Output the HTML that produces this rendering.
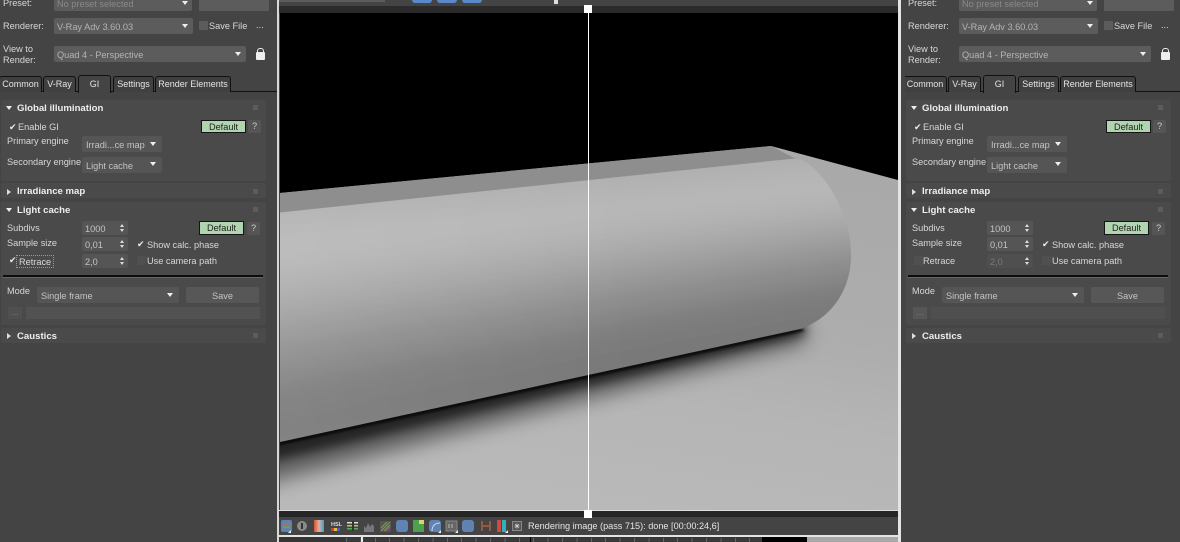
<!DOCTYPE html>
<html><head><meta charset="utf-8"><style>
html,body{margin:0;padding:0;background:#444}
#r{position:relative;width:1180px;height:542px;overflow:hidden;background:#444;font-family:"Liberation Sans",sans-serif;font-size:9.2px;color:#ddd}
#r div,#r span{position:absolute;white-space:nowrap;box-sizing:border-box}
.p{top:0;height:542px;width:275px;overflow:hidden;background:#444}
.dd{background:#5c5c5c;color:#b4b4b4;line-height:18px;padding-left:3px;border-radius:2px}
.dd2{background:#555;color:#c4c4c4;line-height:18px;padding-left:4px;border-radius:2px}
.ar{width:0;height:0;border-left:3px solid transparent;border-right:3px solid transparent;border-top:4px solid #eee}
.tab{top:76px;height:16px;background:#404040;border:1px solid #111;border-bottom:0;border-radius:3px 3px 0 0;line-height:15px;text-align:center;color:#e4e4e4;font-size:9px}
.ro{left:1px;width:265px;background:#4a4a4a;border-radius:2px}
.h{font-weight:bold;font-size:9.6px;color:#eee;left:17px}
.t{color:#d8d8d8}
.cb{width:9px;height:9px;background:#505050}
.ck{color:#eee;font-size:9px;line-height:9px}
.sp{background:#555;color:#c4c4c4;width:46px;height:14px;line-height:16px;padding-left:3px;left:82px;border-radius:2px}
.sp:after{content:"";position:absolute;right:4px;top:0;width:0;height:0;border-left:2px solid transparent;border-right:2px solid transparent;border-top:3px solid transparent;border-bottom:3px solid #ddd}
.sp:before{content:"";position:absolute;right:4px;top:8px;width:0;height:0;border-left:2px solid transparent;border-right:2px solid transparent;border-top:3px solid #ddd}
.def{width:45px;height:13px;background:#b0d4b0;border:1px solid #151515;color:#222;text-align:center;line-height:12px}
.q{width:13px;height:13px;background:#555;color:#ccc;text-align:center;line-height:13px;border-radius:2px}
.gr{width:5px;height:5px;left:253px;background:#5c5c5c}
</style></head><body><div id="r">

<!-- centre -->
<div style="left:277px;top:0;width:625px;height:6px;background:#444"></div>
<div style="left:278px;top:0;width:107px;height:2px;background:#5c5c5c"></div>
<div style="left:412px;top:0;width:20px;height:3px;background:#5b88c8;border-radius:0 0 3px 3px"></div>
<div style="left:437px;top:0;width:20px;height:3px;background:#5b88c8;border-radius:0 0 3px 3px"></div>
<div style="left:462px;top:0;width:20px;height:3px;background:#5b88c8;border-radius:0 0 3px 3px"></div>
<div style="left:554px;top:0;width:4px;height:4px;background:#ddd"></div>
<div style="left:279px;top:6px;width:620px;height:7px;background:#2b2b2b"></div>
<svg style="position:absolute;left:280px;top:13px" width="618" height="497" viewBox="280 13 618 497">
<defs>
<linearGradient id="f" gradientUnits="userSpaceOnUse" x1="700" y1="150" x2="640" y2="510">
<stop offset="0" stop-color="#a9a9a9"/><stop offset=".45" stop-color="#adadad"/><stop offset=".7" stop-color="#b5b5b5"/><stop offset="1" stop-color="#b9b9b9"/></linearGradient>
<linearGradient id="lt" gradientUnits="userSpaceOnUse" x1="280" y1="0" x2="640" y2="0"><stop offset="0" stop-color="#fff" stop-opacity=".07"/><stop offset="1" stop-color="#fff" stop-opacity="0"/></linearGradient>
<filter id="b" filterUnits="userSpaceOnUse" x="150" y="50" width="800" height="520"><feGaussianBlur stdDeviation="10"/></filter>
<filter id="b3" filterUnits="userSpaceOnUse" x="150" y="50" width="800" height="520"><feGaussianBlur stdDeviation="5"/></filter>
<filter id="b2" filterUnits="userSpaceOnUse" x="150" y="50" width="800" height="520"><feGaussianBlur stdDeviation="1"/></filter>
<filter id="b5" filterUnits="userSpaceOnUse" x="150" y="50" width="800" height="520"><feGaussianBlur stdDeviation="9"/></filter>
<clipPath id="cyl"><path d="M280,212.5 L790,159 Q800,158 806,162 C826,176 852,214 851,258 C850,290 832,318 800,329 L280,442 Z"/></clipPath>
</defs>
<rect x="280" y="13" width="618" height="497" fill="#000"/>
<polygon points="280,193 771,146 898,180 898,510 280,510" fill="url(#f)"/>
<polygon points="280,193 771,146 796,159 280,214" fill="#8e8e8e"/>
<polygon points="200,440 800,310 806,342 200,500" fill="#000" opacity=".5" filter="url(#b)"/>
<polygon points="200,440 800,320 806,334 200,478" fill="#000" opacity=".6" filter="url(#b3)"/>
<polygon points="240,450 800,328 805,331 240,454" fill="#000" opacity=".7" filter="url(#b2)"/>
<g clip-path="url(#cyl)"><g filter="url(#b5)">
<polygon points="180,169.9 900,117.2 900,149.6 180,216.7" fill="#adadad"/>
<polygon points="180,216.7 900,149.6 900,165.8 180,240.1" fill="#b2b2b2"/>
<polygon points="180,240.1 900,165.8 900,182 180,263.5" fill="#b8b8b8"/>
<polygon points="180,263.5 900,182 900,198.2 180,286.9" fill="#b6b6b6"/>
<polygon points="180,286.9 900,198.2 900,214.4 180,310.3" fill="#aeaeae"/>
<polygon points="180,310.3 900,214.4 900,230.6 180,333.7" fill="#a4a4a4"/>
<polygon points="180,333.7 900,230.6 900,246.8 180,357.1" fill="#999"/>
<polygon points="180,357.1 900,246.8 900,263 180,380.5" fill="#8e8e8e"/>
<polygon points="180,380.5 900,263 900,279.2 180,403.9" fill="#848484"/>
<polygon points="180,403.9 900,279.2 900,295.4 180,427.3" fill="#7c7c7c"/>
<polygon points="180,427.3 900,295.4 900,311.6 180,450.7" fill="#797979"/>
<polygon points="180,450.7 900,311.6 900,344 180,497.5" fill="#7a7a7a"/>
</g><rect x="280" y="140" width="360" height="310" fill="url(#lt)"/></g>
</svg>
<div style="left:279px;top:510px;width:620px;height:1px;background:#ddd"></div>
<div style="left:279px;top:511px;width:620px;height:6px;background:#262626"></div>
<div style="left:279px;top:517px;width:620px;height:18px;background:#444"></div>
<div style="left:279px;top:535px;width:620px;height:1.5px;background:#e4e4e4"></div>
<div style="left:279px;top:536.5px;width:620px;height:5.5px;background:#363636"></div>
<div style="left:346px;top:538px;width:416px;height:4px;background:repeating-linear-gradient(90deg,#666 0 1px,#3a3a3a 1px 14.4px)"></div>
<div style="left:361px;top:537px;width:2px;height:5px;background:#eee"></div>
<div style="left:530px;top:537px;width:1px;height:5px;background:#000"></div>
<div style="left:762px;top:537px;width:45px;height:5px;background:#000"></div>
<div style="left:807px;top:537px;width:92px;height:5px;background:#a8a8a8"></div>
<div style="left:277px;top:0;width:2px;height:542px;background:#d8d8d8"></div>
<div style="left:898px;top:0;width:3px;height:542px;background:#e4e4e4"></div>
<div style="left:588px;top:8px;width:1px;height:505px;background:#fff"></div>
<div style="left:584px;top:5px;width:8px;height:8px;background:#fff"></div>
<div style="left:584px;top:510px;width:8px;height:8px;background:#fff"></div>

<!-- toolbar icons -->
<svg style="position:absolute;left:279px;top:517px" width="246" height="18" viewBox="279 517 246 18">
<rect x="281" y="520" width="11" height="12" rx="2" fill="#5f84ac"/><rect x="283" y="523" width="7" height="2" fill="#b06a70"/><rect x="283" y="526" width="7" height="2" fill="#6a9a70"/><path d="M291 530v3h-3z" fill="#eee"/>
<circle cx="302" cy="526" r="5" fill="#8a8a8a"/><rect x="301" y="523" width="2" height="6" fill="#333"/>
<defs><linearGradient id="g1"><stop offset="0" stop-color="#d4542c"/><stop offset=".5" stop-color="#e2b0a0"/><stop offset="1" stop-color="#38a0d0"/></linearGradient></defs>
<rect x="314" y="520" width="10" height="12" fill="url(#g1)"/>
<text x="331" y="526" font-family="Liberation Sans" font-size="5.5" font-weight="bold" fill="#ddd">HSL</text><rect x="331" y="528" width="3" height="3" fill="#d04040"/><rect x="334" y="528" width="3" height="3" fill="#e0c040"/><rect x="337" y="528" width="3" height="3" fill="#4060d0"/>
<rect x="347" y="522" width="11" height="1.5" fill="#ddd"/><rect x="347" y="525" width="11" height="1.5" fill="#d4c040"/><rect x="347" y="528" width="11" height="1.5" fill="#50b050"/><rect x="352" y="521" width="2" height="10" fill="#333"/>
<path d="M364 532v-6l2 2 2-5 2 4 2-3 2 2v6z" fill="#777"/>
<rect x="380" y="521" width="11" height="11" fill="#555"/><path d="M381 531l9-9M381 528l6-6M384 531l6-6" stroke="#7aa050" stroke-width="1" fill="none"/><path d="M386 531l4-4" stroke="#b05090"/>
<rect x="396" y="520" width="12" height="12" rx="3" fill="#5f84b4"/>
<rect x="413" y="520" width="11" height="12" fill="#4ea04e"/><path d="M419 520h5v4h-5z" fill="#d8d860"/>
<rect x="429" y="520" width="12" height="12" rx="3" fill="#5f84b4"/><path d="M432 531c0-5 3-8 8-8" stroke="#cfd8e4" fill="none"/><path d="M441 530v3h-3z" fill="#eee"/>
<rect x="446" y="521" width="11" height="10" fill="#666" stroke="#888"/><path d="M449 524v4M452 524v4" stroke="#bbb"/><path d="M458 530v3h-3z" fill="#eee"/>
<rect x="462" y="520" width="12" height="12" rx="3" fill="#5f84b4"/>
<path d="M482 521v10M490 521v10M483 526h6" stroke="#b06040" stroke-width="1.5" fill="none"/>
<rect x="497" y="520" width="4" height="12" fill="#d04840"/><rect x="502" y="520" width="4" height="12" fill="#30b0b8"/><path d="M508 530v3h-3z" fill="#eee"/>
<rect x="512.5" y="521.5" width="9" height="9" fill="#555" stroke="#888"/><path d="M517 523.5v5M514.5 526h5M515 524l4 4M519 524l-4 4" stroke="#ccc" stroke-width=".7"/>
</svg>
<span style="left:528px;top:520px;font-size:9.15px;line-height:13px;color:#e6e6e6">Rendering image (pass 715): done [00:00:24,6]</span>

<!-- left panel -->
<div class="p" style="left:0;width:277px">
<span class="t" style="left:3px;top:-2px">Preset:</span>
<div class="dd" style="left:54px;top:-5px;width:138px;height:16px;color:#8a8a8a">No preset selected</div><div class="ar" style="left:182px;top:1px"></div>
<div style="left:199px;top:-5px;width:70px;height:16px;background:#5c5c5c"></div>
<span class="t" style="left:3px;top:21px">Renderer:</span>
<div class="dd" style="left:54px;top:18px;width:139px;height:16px">V-Ray Adv 3.60.03</div><div class="ar" style="left:182px;top:24px"></div>
<div class="cb" style="left:199px;top:21px;background:#5c5c5c"></div><span class="t" style="left:209px;top:21px">Save File</span><span class="t" style="left:256px;top:20px">...</span>
<span class="t" style="left:3px;top:44px">View to</span><span class="t" style="left:3px;top:55px">Render:</span>
<div class="dd" style="left:54px;top:46px;width:192px;height:16px">Quad 4 - Perspective</div><div class="ar" style="left:235px;top:52px"></div>
<div style="left:256px;top:52px;width:9px;height:8px;background:#eee;border-radius:1px"></div><div style="left:257px;top:48px;width:7px;height:6px;border:1.5px solid #eee;border-bottom:0;border-radius:3px 3px 0 0"></div>
<div style="left:0;top:91px;width:277px;height:1px;background:#111"></div>
<div class="tab" style="left:-1px;width:43px">Common</div>
<div class="tab" style="left:43px;width:33px">V-Ray</div>
<div class="tab" style="left:78px;width:33px;top:75px;height:18px;background:#444;line-height:17px">GI</div>
<div class="tab" style="left:113px;width:41px">Settings</div>
<div class="tab" style="left:155px;width:76px">Render Elements</div>
<div class="ro" style="top:100px;height:81px"></div>
<div class="ro" style="top:183px;height:15px"></div>
<div class="ro" style="top:202px;height:123px"></div>
<div class="ro" style="top:328px;height:15px"></div>
<div class="ar" style="left:6px;top:106px"></div><span class="h" style="top:103px">Global illumination</span><div class="gr" style="top:105px"></div>
<span class="ck" style="left:9px;top:123px">✔</span><span class="t" style="left:18px;top:122px">Enable GI</span>
<div class="def" style="left:201px;top:120px">Default</div><div class="q" style="left:248px;top:120px">?</div>
<span class="t" style="left:7px;top:136px">Primary engine</span>
<div class="dd2" style="left:82px;top:136px;width:80px;height:16px">Irradi...ce map</div><div class="ar" style="left:150px;top:142px"></div>
<span class="t" style="left:7px;top:157px">Secondary engine</span>
<div class="dd2" style="left:82px;top:157px;width:80px;height:16px">Light cache</div><div class="ar" style="left:150px;top:162px"></div>
<div style="left:7px;top:189px;width:0;height:0;border-top:3px solid transparent;border-bottom:3px solid transparent;border-left:4px solid #ddd"></div><span class="h" style="top:186px">Irradiance map</span><div class="gr" style="top:189px"></div>
<div class="ar" style="left:6px;top:208px"></div><span class="h" style="top:205px">Light cache</span><div class="gr" style="top:207px"></div>
<span class="t" style="left:7px;top:223px">Subdivs</span><div class="sp" style="top:221px">1000</div>
<div class="def" style="left:199px;top:221px;height:14px;line-height:13px">Default</div><div class="q" style="left:247px;top:222px">?</div>
<span class="t" style="left:7px;top:238px">Sample size</span><div class="sp" style="top:237px">0,01</div>
<span class="ck" style="left:137px;top:240px">✔</span><span class="t" style="left:147px;top:240px">Show calc. phase</span>
<span class="ck" style="left:9px;top:256px">✔</span><span class="t" style="left:16px;top:255px;border:1px dotted #999;padding:0 2px;height:13px;line-height:12px">Retrace</span><div class="sp" style="top:254px">2,0</div>
<div class="cb" style="left:137px;top:256px"></div><span class="t" style="left:147px;top:256px">Use camera path</span>
<div style="left:3px;top:275px;width:260px;height:2px;background:#0c0c0c"></div><div style="left:3px;top:277px;width:260px;height:1px;background:#666"></div>
<span class="t" style="left:7px;top:286px">Mode</span>
<div class="dd2" style="left:37px;top:287px;width:142px;height:16px">Single frame</div><div class="ar" style="left:167px;top:293px"></div>
<div class="dd2" style="left:186px;top:287px;width:73px;height:16px;padding:0;text-align:center;background:#575757">Save</div>
<div style="left:8px;top:307px;width:14px;height:12px;background:#505050;color:#777;text-align:center;line-height:10px">...</div>
<div style="left:26px;top:307px;width:234px;height:12px;background:#525252"></div>
<div style="left:7px;top:333px;width:0;height:0;border-top:3px solid transparent;border-bottom:3px solid transparent;border-left:4px solid #ddd"></div><span class="h" style="top:331px">Caustics</span><div class="gr" style="top:333px"></div>
</div>

<!-- right panel -->
<div class="p" style="left:905px">
<span class="t" style="left:3px;top:-2px">Preset:</span>
<div class="dd" style="left:54px;top:-5px;width:138px;height:16px;color:#8a8a8a">No preset selected</div><div class="ar" style="left:182px;top:1px"></div>
<div style="left:199px;top:-5px;width:70px;height:16px;background:#5c5c5c"></div>
<span class="t" style="left:3px;top:21px">Renderer:</span>
<div class="dd" style="left:54px;top:18px;width:139px;height:16px">V-Ray Adv 3.60.03</div><div class="ar" style="left:182px;top:24px"></div>
<div class="cb" style="left:199px;top:21px;background:#5c5c5c"></div><span class="t" style="left:209px;top:21px">Save File</span><span class="t" style="left:256px;top:20px">...</span>
<span class="t" style="left:3px;top:44px">View to</span><span class="t" style="left:3px;top:55px">Render:</span>
<div class="dd" style="left:54px;top:46px;width:192px;height:16px">Quad 4 - Perspective</div><div class="ar" style="left:235px;top:52px"></div>
<div style="left:256px;top:52px;width:9px;height:8px;background:#eee;border-radius:1px"></div><div style="left:257px;top:48px;width:7px;height:6px;border:1.5px solid #eee;border-bottom:0;border-radius:3px 3px 0 0"></div>
<div style="left:-2px;top:91px;width:277px;height:1px;background:#111"></div>
<div class="tab" style="left:-2px;width:44px">Common</div>
<div class="tab" style="left:43px;width:33px">V-Ray</div>
<div class="tab" style="left:78px;width:33px;top:75px;height:18px;background:#444;line-height:17px">GI</div>
<div class="tab" style="left:113px;width:41px">Settings</div>
<div class="tab" style="left:155px;width:76px">Render Elements</div>
<div class="ro" style="top:100px;height:81px"></div>
<div class="ro" style="top:183px;height:15px"></div>
<div class="ro" style="top:202px;height:123px"></div>
<div class="ro" style="top:328px;height:15px"></div>
<div class="ar" style="left:6px;top:106px"></div><span class="h" style="top:103px">Global illumination</span><div class="gr" style="top:105px"></div>
<span class="ck" style="left:9px;top:123px">✔</span><span class="t" style="left:18px;top:122px">Enable GI</span>
<div class="def" style="left:201px;top:120px">Default</div><div class="q" style="left:248px;top:120px">?</div>
<span class="t" style="left:7px;top:136px">Primary engine</span>
<div class="dd2" style="left:82px;top:136px;width:80px;height:16px">Irradi...ce map</div><div class="ar" style="left:150px;top:142px"></div>
<span class="t" style="left:7px;top:157px">Secondary engine</span>
<div class="dd2" style="left:82px;top:157px;width:80px;height:16px">Light cache</div><div class="ar" style="left:150px;top:162px"></div>
<div style="left:7px;top:189px;width:0;height:0;border-top:3px solid transparent;border-bottom:3px solid transparent;border-left:4px solid #ddd"></div><span class="h" style="top:186px">Irradiance map</span><div class="gr" style="top:189px"></div>
<div class="ar" style="left:6px;top:208px"></div><span class="h" style="top:205px">Light cache</span><div class="gr" style="top:207px"></div>
<span class="t" style="left:7px;top:223px">Subdivs</span><div class="sp" style="top:221px">1000</div>
<div class="def" style="left:199px;top:221px;height:14px;line-height:13px">Default</div><div class="q" style="left:247px;top:222px">?</div>
<span class="t" style="left:7px;top:238px">Sample size</span><div class="sp" style="top:237px">0,01</div>
<span class="ck" style="left:137px;top:240px">✔</span><span class="t" style="left:147px;top:240px">Show calc. phase</span>
<div class="cb" style="left:9px;top:256px"></div><span class="t" style="left:18px;top:256px">Retrace</span><div class="sp" style="top:254px;color:#777;background:#4f4f4f">2,0</div>
<div class="cb" style="left:137px;top:256px"></div><span class="t" style="left:147px;top:256px">Use camera path</span>
<div style="left:3px;top:275px;width:260px;height:2px;background:#0c0c0c"></div><div style="left:3px;top:277px;width:260px;height:1px;background:#666"></div>
<span class="t" style="left:7px;top:286px">Mode</span>
<div class="dd2" style="left:37px;top:287px;width:142px;height:16px">Single frame</div><div class="ar" style="left:167px;top:293px"></div>
<div class="dd2" style="left:186px;top:287px;width:73px;height:16px;padding:0;text-align:center;background:#575757">Save</div>
<div style="left:8px;top:307px;width:14px;height:12px;background:#565656;color:#777;text-align:center;line-height:10px">...</div>
<div style="left:26px;top:307px;width:234px;height:12px;background:#4f4f4f"></div>
<div style="left:7px;top:333px;width:0;height:0;border-top:3px solid transparent;border-bottom:3px solid transparent;border-left:4px solid #ddd"></div><span class="h" style="top:331px">Caustics</span><div class="gr" style="top:333px"></div>
</div>
</div></body></html>
